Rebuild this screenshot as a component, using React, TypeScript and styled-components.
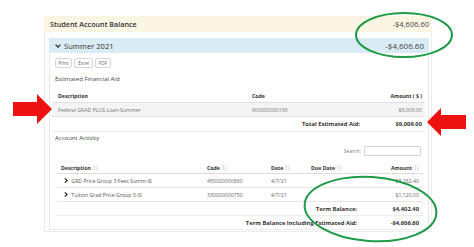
import React from "react";
import styled, { createGlobalStyle } from "styled-components";

const GlobalStyle = createGlobalStyle`
  html, body {
    margin: 0;
    padding: 0;
    background: #fff;
  }
  body {
    font-family: "Open Sans", "Noto Sans", Arial, sans-serif;
    color: #333;
  }
`;

const Page = styled.div`
  position: relative;
  width: 474px;
  height: 247px;
  padding: 16px 0 0 44px;
  box-sizing: border-box;
  overflow: hidden;
`;

const OuterPanel = styled.div`
  width: 388px;
  height: 216px;
  box-sizing: border-box;
  border: 1px solid #ececec;
  border-top: none;
`;

const OuterHeading = styled.div`
  display: flex;
  align-items: center;
  justify-content: space-between;
  height: 16px;
  margin: 0 -1px;
  padding: 0 3px 0 6px;
  background: #fbf5e3;
  font-size: 7.2px;
  font-weight: 600;
  color: #333;
`;

const HeadingAmount = styled.span<{ $size: number }>`
  font-size: ${(p) => p.$size}px;
  font-weight: 400;
  color: #444;
`;

const OuterBody = styled.div`
  padding: 6px 2px 0 4px;
`;

const InnerPanel = styled.div`
  height: 192px;
  box-sizing: border-box;
  border: 1px solid #e6e6e6;
  border-top: none;
`;

const InnerHeading = styled.div`
  display: flex;
  align-items: center;
  justify-content: space-between;
  height: 15px;
  margin: 0 -1px;
  padding: 0 5px 0 6px;
  background: #d9ebf5;
  font-size: 7.6px;
  color: #333;
`;

const HeadingTitle = styled.span`
  display: flex;
  align-items: center;
  gap: 3px;
`;

const InnerBody = styled.div`
  padding: 5px 3px 0 2px;
`;

const ButtonRow = styled.div`
  display: flex;
  gap: 2px;
  margin-left: 3px;
`;

const ExportButton = styled.button<{ $w: number }>`
  width: ${(p) => p.$w}px;
  height: 10px;
  padding: 0;
  border: 1px solid #d6d6d6;
  border-radius: 2px;
  background: #fff;
  font-family: inherit;
  font-size: 4.5px;
  color: #666;
`;

const SectionTitle = styled.div<{ $mt: number }>`
  height: 10px;
  line-height: 10px;
  margin: ${(p) => p.$mt}px 0 0 3px;
  font-size: 6px;
  color: #444;
`;

const AidTable = styled.div`
  margin-top: 6px;
  font-size: 5.2px;
`;

const AidRow = styled.div<{ $striped?: boolean; $h: number }>`
  display: grid;
  grid-template-columns: 194px 94px 1fr;
  align-items: center;
  height: ${(p) => p.$h}px;
  border-bottom: 1px solid #e2e2e2;
  background: ${(p) => (p.$striped ? "#f4f4f4" : "transparent")};
  color: ${(p) => (p.$striped ? "#777" : "#333")};
  font-weight: ${(p) => (p.$striped ? 400 : 700)};
`;

const TotalRow = styled.div<{ $cols: string; $h: number }>`
  display: grid;
  grid-template-columns: ${(p) => p.$cols};
  align-items: center;
  height: ${(p) => p.$h}px;
  border-bottom: 1px solid #ececec;
  font-size: 5.8px;
  font-weight: 700;
  color: #333;
`;

const Cell = styled.div<{ $right?: boolean; $pl?: number; $pr?: number }>`
  display: flex;
  align-items: center;
  justify-content: ${(p) => (p.$right ? "flex-end" : "flex-start")};
  gap: 2px;
  padding-left: ${(p) => p.$pl ?? 0}px;
  padding-right: ${(p) => p.$pr ?? 0}px;
  white-space: nowrap;
`;

const SearchBar = styled.div`
  display: flex;
  align-items: center;
  justify-content: flex-end;
  gap: 3px;
  height: 10px;
  margin: 3px 4px 0 0;
  font-size: 5px;
  color: #777;
`;

const SearchInput = styled.div`
  width: 57px;
  height: 10px;
  box-sizing: border-box;
  border: 1px solid #d4d4d4;
  border-radius: 1px;
`;

const ActivityTable = styled.div`
  margin: 6px 2px 0 5px;
  font-size: 5.2px;
`;

const ActivityRow = styled.div<{ $head?: boolean; $h: number }>`
  display: grid;
  grid-template-columns: 146px 64px 40px 53px 1fr;
  align-items: center;
  height: ${(p) => p.$h}px;
  border-bottom: 1px solid ${(p) => (p.$head ? "#dcdcdc" : "#e6e6e6")};
  font-weight: ${(p) => (p.$head ? 700 : 400)};
  color: ${(p) => (p.$head ? "#333" : "#666")};
`;

const RowLabel = styled.span`
  color: #555;
`;

const Overlay = styled.svg`
  position: absolute;
  left: 0;
  top: 0;
  pointer-events: none;
`;

function SortIcon() {
  return (
    <svg width="5" height="6" viewBox="0 0 5 6">
      <path d="M1.2 0.5 V5.5 M0.2 1.5 L1.2 0.5 L2.2 1.5 M3.8 0.5 V5.5 M2.8 4.5 L3.8 5.5 L4.8 4.5" stroke="#c4c4c4" strokeWidth="0.6" fill="none" />
    </svg>
  );
}

function RowChevron() {
  return (
    <svg width="4" height="5" viewBox="0 0 4 5">
      <path d="M0.8 0.4 L3.2 2.5 L0.8 4.6" stroke="#222" strokeWidth="1.2" fill="none" />
    </svg>
  );
}

function DownChevron() {
  return (
    <svg width="6" height="4" viewBox="0 0 6 4">
      <path d="M0.6 0.6 L3 3.2 L5.4 0.6" stroke="#333" strokeWidth="1.3" fill="none" />
    </svg>
  );
}

const activity = [
  { desc: "GRD Price Group 3 Fees Summ-IS", code: "450000000860", date: "4/7/21", amount: "$3,282.40" },
  { desc: "Tuition Grad Price Group 3-IS", code: "330000000750", date: "4/7/21", amount: "$1,120.00" },
];

export default function App() {
  return (
    <>
      <GlobalStyle />
      <Page>
        <OuterPanel>
          <OuterHeading>
            <span>Student Account Balance</span>
            <HeadingAmount $size={7.5}>-$4,606.60</HeadingAmount>
          </OuterHeading>
          <OuterBody>
            <InnerPanel>
              <InnerHeading>
                <HeadingTitle>
                  <DownChevron />
                  Summer 2021
                </HeadingTitle>
                <HeadingAmount $size={8}>-$4,606.60</HeadingAmount>
              </InnerHeading>
              <InnerBody>
                <ButtonRow>
                  <ExportButton $w={17}>Print</ExportButton>
                  <ExportButton $w={19}>Excel</ExportButton>
                  <ExportButton $w={16}>PDF</ExportButton>
                </ButtonRow>
                <SectionTitle $mt={6}>Estimated Financial Aid</SectionTitle>
                <AidTable>
                  <AidRow $h={12}>
                    <Cell $pl={6}>Description</Cell>
                    <Cell $pl={6}>Code</Cell>
                    <Cell $right $pr={3}>Amount ( $ )</Cell>
                  </AidRow>
                  <AidRow $h={13} $striped>
                    <Cell $pl={6}>Federal GRAD PLUS Loan-Summer</Cell>
                    <Cell $pl={6}>900000000196</Cell>
                    <Cell $right $pr={3}>$9,009.00</Cell>
                  </AidRow>
                  <TotalRow $cols="310px 1fr" $h={14}>
                    <Cell $right $pr={2}>Total Estimated Aid:</Cell>
                    <Cell $right $pr={3}>$9,009.00</Cell>
                  </TotalRow>
                </AidTable>
                <SectionTitle $mt={1}>Account Activity</SectionTitle>
                <SearchBar>
                  Search:
                  <SearchInput />
                </SearchBar>
                <ActivityTable>
                  <ActivityRow $head $h={11}>
                    <Cell $pl={4}>Description <SortIcon /></Cell>
                    <Cell $pl={4}>Code <SortIcon /></Cell>
                    <Cell $pl={4}>Date <SortIcon /></Cell>
                    <Cell $pl={4}>Due Date <SortIcon /></Cell>
                    <Cell $right $pr={4}>Amount <SortIcon /></Cell>
                  </ActivityRow>
                  {activity.map((a) => (
                    <ActivityRow key={a.code} $h={13}>
                      <Cell $pl={7}>
                        <RowChevron />
                        <RowLabel>&nbsp;{a.desc}</RowLabel>
                      </Cell>
                      <Cell $pl={4}>{a.code}</Cell>
                      <Cell $pl={4}>{a.date}</Cell>
                      <Cell />
                      <Cell $right $pr={4}>{a.amount}</Cell>
                    </ActivityRow>
                  ))}
                  <TotalRow $cols="303px 1fr" $h={13}>
                    <Cell $right $pr={3}>Term Balance:</Cell>
                    <Cell $right $pr={4}>$4,402.40</Cell>
                  </TotalRow>
                  <TotalRow $cols="303px 1fr" $h={13}>
                    <Cell $right $pr={3}>Term Balance Including Estimated Aid:</Cell>
                    <Cell $right $pr={4}>-$4,606.60</Cell>
                  </TotalRow>
                </ActivityTable>
              </InnerBody>
            </InnerPanel>
          </OuterBody>
        </OuterPanel>
        <Overlay width="474" height="247" viewBox="0 0 474 247">
          <polygon points="13,102 37,102 37,94 52,109 37,124 37,116 13,116" fill="#ee1111" />
          <polygon points="427,122 441,108 441,115 466,115 466,129 441,129 441,136" fill="#ee1111" />
          <ellipse cx="404" cy="35" rx="48" ry="22" fill="none" stroke="#1f9a48" strokeWidth="2" />
          <ellipse cx="370.5" cy="209" rx="66" ry="32" fill="none" stroke="#1f9a48" strokeWidth="2" transform="rotate(4 370.5 209)" />
        </Overlay>
      </Page>
    </>
  );
}
